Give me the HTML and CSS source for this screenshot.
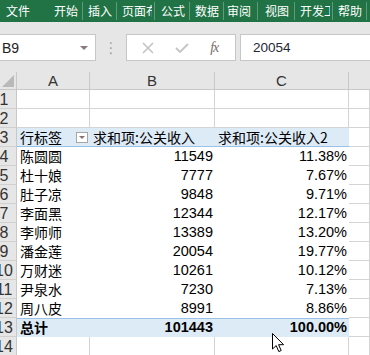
FILE: index.html
```html
<!DOCTYPE html>
<html lang="zh-CN">

<head>
  <meta charset="UTF-8">
  <title>数据透视表</title>
  <link rel="stylesheet" href="styles.css">
</head>

<body>
  <div class="ribbon">
    <span class="tab tab-file">文件</span>
    <span class="tab w33"><i>开始</i></span>
    <span class="tab w34"><i>插入</i></span>
    <span class="tab w38"><i>页面布局</i></span>
    <span class="tab w35"><i>公式</i></span>
    <span class="tab w34"><i>数据</i></span>
    <span class="tab w34 p3"><i>审阅</i></span>
    <span class="tab w37 p7"><i>视图</i></span>
    <span class="tab w38"><i>开发工具</i></span>
    <span class="tab w34"><i>帮助</i></span>
  </div>

  <div class="fbar">
    <div class="namebox">
      <span>B9</span>
      <span class="caret"></span>
    </div>
    <div class="dots">⋮</div>
    <div class="fbtns">
      <svg width="12" height="12" viewBox="0 0 12 12"><path d="M1 1L11 11M11 1L1 11" stroke="#c4c4c4" stroke-width="1.6" fill="none"/></svg>
      <svg width="14" height="12" viewBox="0 0 14 12"><path d="M1 6L5 10L13 2" stroke="#c4c4c4" stroke-width="1.8" fill="none"/></svg>
      <span class="fx">fx</span>
    </div>
    <div class="finput">20054</div>
  </div>

  <div class="sheet">
    <div class="hd corner"><span class="tri"></span></div>
    <div class="hd col">A</div>
    <div class="hd col">B</div>
    <div class="hd col">C</div>
    <div class="hd col last"></div>

    <div class="rn"><b>1</b></div><div class="c"></div><div class="c"></div><div class="c"></div><div class="c"></div>
    <div class="rn"><b>2</b></div><div class="c"></div><div class="c"></div><div class="c"></div><div class="c"></div>

    <div class="rn"><b>3</b></div>
    <div class="p head txt">行标签<span class="filter"></span></div>
    <div class="p head txt">求和项:公关收入</div>
    <div class="p head txt">求和项:公关收入2</div>
    <div class="c"></div>

    <div class="rn"><b>4</b></div><div class="p txt">陈圆圆</div><div class="p num">11549</div><div class="p num">11.38%</div><div class="c"></div>
    <div class="rn"><b>5</b></div><div class="p txt">杜十娘</div><div class="p num">7777</div><div class="p num">7.67%</div><div class="c"></div>
    <div class="rn"><b>6</b></div><div class="p txt">肚子凉</div><div class="p num">9848</div><div class="p num">9.71%</div><div class="c"></div>
    <div class="rn"><b>7</b></div><div class="p txt">李面黑</div><div class="p num">12344</div><div class="p num">12.17%</div><div class="c"></div>
    <div class="rn"><b>8</b></div><div class="p txt">李师师</div><div class="p num">13389</div><div class="p num">13.20%</div><div class="c"></div>
    <div class="rn"><b>9</b></div><div class="p txt">潘金莲</div><div class="p num">20054</div><div class="p num">19.77%</div><div class="c"></div>
    <div class="rn"><b>10</b></div><div class="p txt">万财迷</div><div class="p num">10261</div><div class="p num">10.12%</div><div class="c"></div>
    <div class="rn"><b>11</b></div><div class="p txt">尹泉水</div><div class="p num">7230</div><div class="p num">7.13%</div><div class="c"></div>
    <div class="rn"><b>12</b></div><div class="p txt">周八皮</div><div class="p num">8991</div><div class="p num">8.86%</div><div class="c"></div>

    <div class="rn"><b>13</b></div>
    <div class="p total txt">总计</div>
    <div class="p total num">101443</div>
    <div class="p total num">100.00%</div>
    <div class="c"></div>

    <div class="rn"><b>14</b></div><div class="c"></div><div class="c"></div><div class="c"></div><div class="c"></div>

    <svg class="cursor" width="13" height="20" viewBox="0 0 13 20">
      <path d="M0.5 0.5L0.5 16L4.2 12.6L6.8 18.6L9.2 17.5L6.6 11.7L11.6 11.7Z" fill="#fff" stroke="#000" stroke-width="1"/>
    </svg>
  </div>
</body>

</html>
```

FILE: styles.css
```css
* {
  margin: 0;
  padding: 0;
  box-sizing: border-box;
}

html,
body {
  width: 100%;
  height: 100%;
  overflow: hidden;
}

body {
  background: #fff;
  font-family: "Liberation Sans", "Noto Sans CJK SC", sans-serif;
  color: #000;
}

/* ribbon */
.ribbon {
  display: flex;
  height: 22px;
  background: #217346;
  color: #fff;
  font-family: "Noto Sans CJK SC", sans-serif;
  font-size: 12px;
  line-height: 22px;
  white-space: nowrap;
}

.tab {
  display: block;
  padding: 0 3px 0 5px;
  position: relative;
}

.tab i {
  display: block;
  font-style: normal;
  overflow: hidden;
}

.tab:after {
  content: '';
  position: absolute;
  right: 0;
  top: 2px;
  bottom: 2px;
  border-right: 1px solid #5e9b7a;
}

.tab-file {
  width: 50px;
  padding-left: 6px;
}

.tab-file:after {
  display: none;
}

.w33 { width: 33px; padding-left: 4px; }
.w34 { width: 34px; }
.w35 { width: 35px; padding-left: 6px; }
.w37 { width: 37px; }
.w38 { width: 38px; }
.p3 { padding-left: 3px; }
.p7 { padding-left: 7px; }

/* formula bar */
.fbar {
  display: flex;
  align-items: center;
  height: 50px;
  padding-bottom: 11px;
  padding-top: 12px;
  background: #e6e6e6;
}

.namebox {
  display: flex;
  align-items: center;
  justify-content: space-between;
  width: 96px;
  height: 27px;
  background: #fff;
  border: 1px solid #c6c6c6;
  border-left: none;
  padding: 0 7px 0 2px;
  font-size: 14px;
  color: #222;
}

.caret {
  width: 0;
  height: 0;
  border: 4px solid transparent;
  border-top: 4px solid #8a7a7a;
  border-bottom: none;
  margin-top: 1px;
}

.dots {
  width: 30px;
  text-align: center;
  color: #a6a6a6;
  font-size: 15px;
  font-family: "DejaVu Sans", sans-serif;
}

.fbtns {
  display: flex;
  align-items: center;
  justify-content: space-around;
  width: 110px;
  height: 27px;
  background: #fff;
  border: 1px solid #c6c6c6;
  padding: 0 6px 0 4px;
}

.fx {
  font-family: "Liberation Serif", serif;
  font-style: italic;
  font-size: 14px;
  color: #7a6a6a;
  letter-spacing: -1px;
}

.finput {
  flex: 1;
  height: 27px;
  margin-left: 4px;
  background: #fff;
  border: 1px solid #c6c6c6;
  border-right: none;
  padding-left: 12px;
  font-size: 13.5px;
  line-height: 25px;
  color: #262637;
}

/* sheet grid */
.sheet {
  position: relative;
  display: grid;
  grid-template-columns: 17px 73px 125px 134px 21px;
  grid-template-rows: 18px repeat(14, 19px);
  font-size: 14px;
}

.hd {
  background: #e6e6e6;
  border-right: 1px solid #c8c8c8;
  border-bottom: 1px solid #c8c8c8;
}

.col {
  text-align: center;
  font-size: 15px;
  line-height: 18px;
  color: #333;
}

.col.last {
  border-right: none;
}

.corner {
  position: relative;
}

.tri {
  position: absolute;
  right: 2px;
  bottom: 2px;
  width: 0;
  height: 0;
  border-left: 12px solid transparent;
  border-bottom: 12px solid #b9b9b9;
}

.rn {
  background: #e6e6e6;
  border-right: 1px solid #c8c8c8;
  border-bottom: 1px solid #d0d0d0;
  overflow: hidden;
  font-size: 16px;
  line-height: 19px;
  color: #333;
}

.rn b {
  display: block;
  font-weight: normal;
  width: 26px;
  margin-left: -9px;
  text-align: center;
}

.c {
  border-right: 1px solid #d4d4d4;
  border-bottom: 1px solid #d4d4d4;
}

.p {
  background: #fff;
  line-height: 19px;
  white-space: nowrap;
  font-family: "Noto Sans CJK SC", sans-serif;
}

.txt {
  padding-left: 3px;
}

.num {
  text-align: right;
  padding-right: 2px;
  font-family: "Liberation Sans", "Noto Sans CJK SC", sans-serif;
  font-size: 14.5px;
}

.head {
  position: relative;
  background: #ddebf7;
  border-bottom: 1px solid #9bc2e6;
  line-height: 18px;
}

.filter {
  position: absolute;
  left: 59px;
  top: 4px;
  width: 12px;
  height: 11px;
  background: #fff;
  border: 1px solid #a6a6a6;
}

.filter:after {
  content: '';
  position: absolute;
  left: 2px;
  top: 3px;
  border: 3px solid transparent;
  border-top: 3px solid #8a7070;
  border-bottom: none;
}

.total {
  background: #ddebf7;
  border-top: 1px solid #9bc2e6;
  font-weight: bold;
  line-height: 17px;
}

.cursor {
  position: absolute;
  left: 272px;
  top: 261px;
}
```
